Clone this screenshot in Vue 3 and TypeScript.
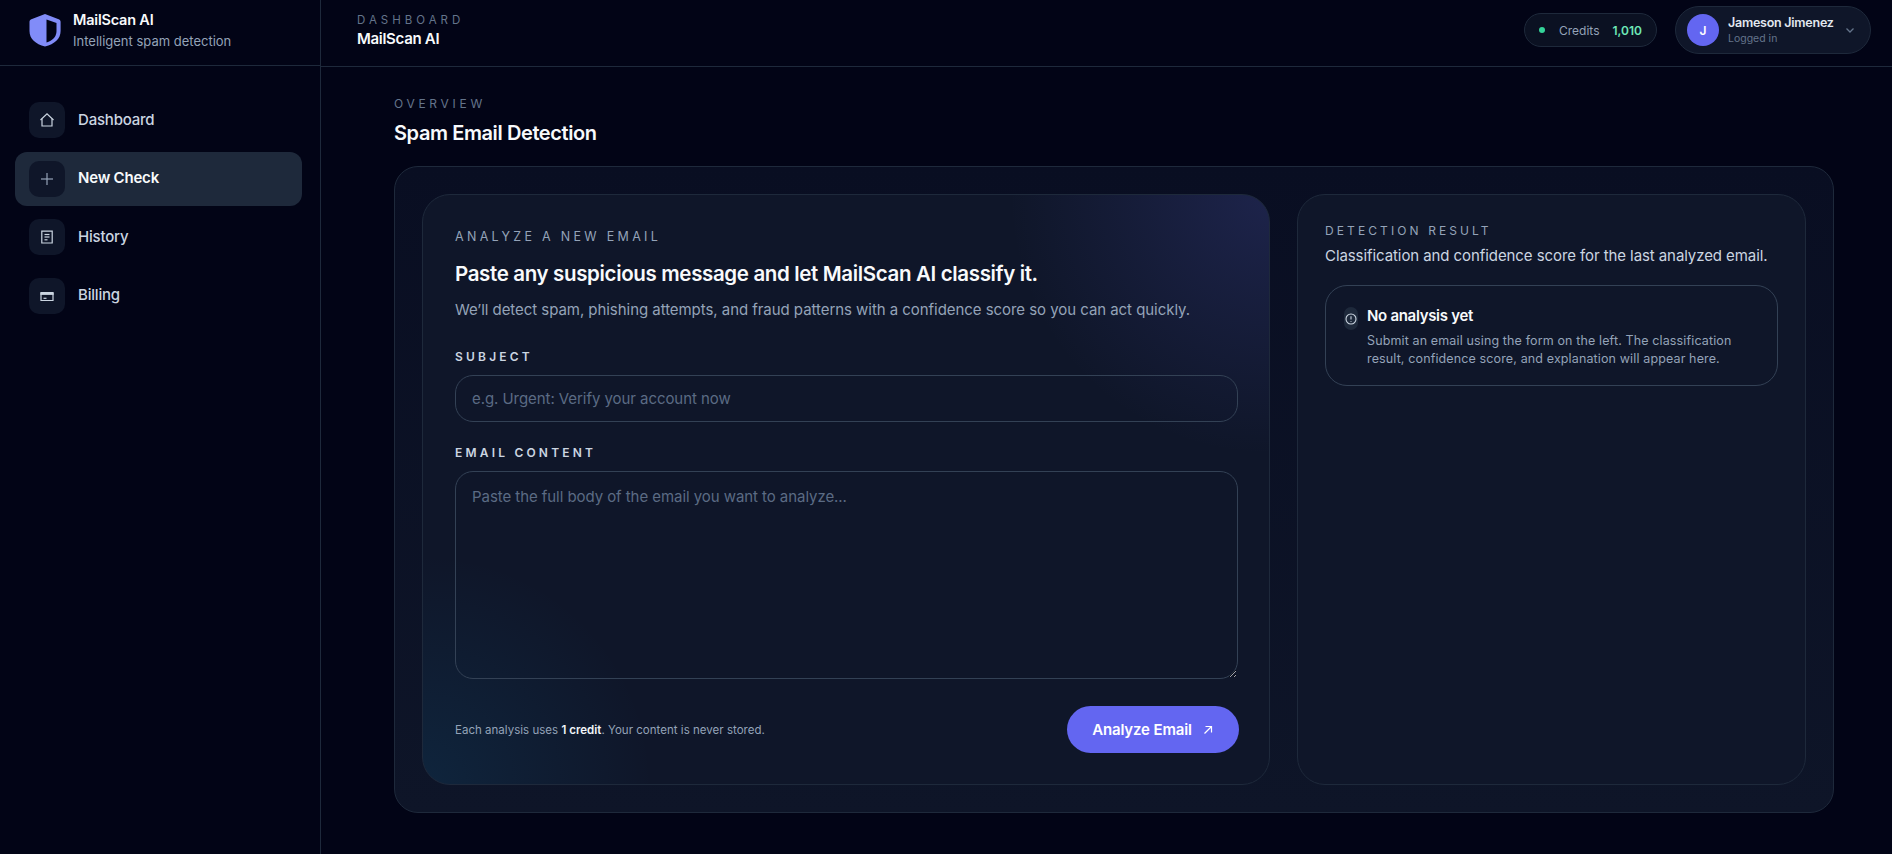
<script setup lang="ts">
interface NavItem {
  label: string
  active?: boolean
  paths: string[]
}

const navItems: NavItem[] = [
  { label: 'Dashboard', paths: ['M3.500 10 10 3.800l6.500 6.200', 'M5 8.800v7.200h10V8.800'] },
  { label: 'New Check', active: true, paths: ['M10 4v12', 'M4 10h12'] },
  { label: 'History', paths: ['M4.800 4.200h10.400v11.800H4.800z', 'M7.500 7.500h5', 'M7.500 10h5', 'M7.500 12.800h3'] },
  { label: 'Billing', paths: ['M4 6.500h12v8H4z', 'M4 7.300h12v1H4z', 'M6.500 12.300h3'] },
]
</script>

<template>
  <div class="app">
    <aside class="sidebar">
      <div class="brand">
        <svg class="shield" viewBox="0 0 32 34" width="32" height="34">
          <path d="M16 1 29 6c2 .7 2.600 1.600 2.600 3v9c0 8-6 13-15.600 15.500C6.500 31 .5 26 .5 18V9c0-1.400.6-2.300 2.500-3z" fill="#818cf8" />
          <path d="M17.500 6.500 27.500 10v8c0 5.800-4 9.500-10 11.500z" fill="#020416" />
        </svg>
        <div class="brand-text">
          <strong>MailScan AI</strong>
          <span>Intelligent spam detection</span>
        </div>
      </div>
      <nav class="nav">
        <a v-for="item in navItems" :key="item.label" class="nav-item" :class="{ active: item.active }">
          <span class="nav-icon">
            <svg viewBox="0 0 20 20" width="20" height="20" fill="none" stroke="currentColor" stroke-width="1.200">
              <path v-for="d in item.paths" :key="d" :d="d" />
            </svg>
          </span>
          <span class="nav-label">{{ item.label }}</span>
        </a>
      </nav>
    </aside>

    <div class="body">
      <header class="topbar">
        <div class="crumb">
          <span>DASHBOARD</span>
          <strong>MailScan AI</strong>
        </div>
        <div class="top-right">
          <div class="credits">
            <i class="dot"></i>
            <span class="credits-label">Credits</span>
            <b>1,010</b>
          </div>
          <div class="user">
            <span class="avatar">J</span>
            <div class="user-text">
              <strong>Jameson Jimenez</strong>
              <span>Logged in</span>
            </div>
            <svg viewBox="0 0 12 12" width="12" height="12" fill="none" stroke="#64748b" stroke-width="1.300">
              <path d="M2.500 4.500 6 8l3.500-3.500" />
            </svg>
          </div>
        </div>
      </header>

      <main class="main">
        <p class="eyebrow">OVERVIEW</p>
        <h1>Spam Email Detection</h1>

        <section class="shell">
          <form class="card form-card" @submit.prevent>
            <p class="label">ANALYZE A NEW EMAIL</p>
            <h2>Paste any suspicious message and let MailScan AI classify it.</h2>
            <p class="lead">We’ll detect spam, phishing attempts, and fraud patterns with a confidence score so you can act quickly.</p>

            <label class="field-label" for="subject">SUBJECT</label>
            <input id="subject" class="input" type="text" placeholder="e.g. Urgent: Verify your account now" />

            <label class="field-label second" for="content">EMAIL CONTENT</label>
            <textarea id="content" class="input area" placeholder="Paste the full body of the email you want to analyze..."></textarea>

            <div class="form-foot">
              <p>Each analysis uses <b>1 credit</b>. Your content is never stored.</p>
              <button type="submit" class="submit">
                Analyze Email
                <svg viewBox="0 0 12 12" width="12" height="12" fill="none" stroke="#fff" stroke-width="1.200">
                  <path d="M2.500 9.500 9.500 2.500" />
                  <path d="M3.500 2.500h6v6" />
                </svg>
              </button>
            </div>
          </form>

          <div class="card result-card">
            <p class="label result-label">DETECTION RESULT</p>
            <p class="result-sub">Classification and confidence score for the last analyzed email.</p>
            <div class="empty">
              <span class="empty-icon">
                <svg viewBox="0 0 14 14" width="14" height="14" fill="none" stroke="#cbd5e1" stroke-width="1.100">
                  <circle cx="7" cy="7" r="5" />
                  <path d="M7 4.200v3.400" />
                  <path d="M7 9.200v.8" />
                </svg>
              </span>
              <div>
                <h3>No analysis yet</h3>
                <p>Submit an email using the form on the left. The classification result, confidence score, and explanation will appear here.</p>
              </div>
            </div>
          </div>
        </section>
      </main>
    </div>
  </div>
</template>

<style>
html,
body {
  margin: 0;
  background: #020617;
}
</style>

<style scoped>
* {
  box-sizing: border-box;
}

.app {
  display: flex;
  height: 854px;
  overflow: hidden;
  background: #020416;
  color: #e2e8f0;
  font-family: Inter, "Noto Sans", sans-serif;
}

p,
h1,
h2,
h3 {
  margin: 0;
}

.sidebar {
  flex: 0 0 321px;
  border-right: 1px solid #1e293b;
}

.brand {
  display: flex;
  align-items: center;
  gap: 12px;
  height: 66px;
  padding: 0 29px 5px;
  border-bottom: 1px solid #1e293b;
}

.shield {
  flex: none;
}

.brand-text {
  display: flex;
  flex-direction: column;
  gap: 5px;
  margin-top: -1px;
}

.brand-text strong {
  font-size: 14.500px;
  font-weight: 600;
  letter-spacing: -0.2px;
  color: #f8fafc;
}

.brand-text span {
  font-size: 13px;
  color: #94a3b8;
}

.nav {
  display: flex;
  flex-direction: column;
  gap: 4.600px;
  padding: 27px 18px 0 15px;
}

.nav-item {
  display: flex;
  align-items: center;
  gap: 13px;
  height: 54px;
  padding: 0 14px;
  border-radius: 12px;
  font-size: 15px;
  font-weight: 500;
  letter-spacing: -0.2px;
  color: #cbd5e1;
}

.nav-item.active {
  background: #1e293b;
  color: #f8fafc;
  font-weight: 600;
}

.nav-icon {
  display: flex;
  align-items: center;
  justify-content: center;
  width: 36px;
  height: 36px;
  border-radius: 10px;
  background: #0f1629;
  color: #cbd5e1;
}

.nav-label {
  margin-bottom: 2px;
}

.active .nav-icon {
  color: #94a3b8;
}

.body {
  flex: 1;
  min-width: 0;
  display: flex;
  flex-direction: column;
}

.topbar {
  flex: 0 0 67px;
  display: flex;
  align-items: center;
  justify-content: space-between;
  padding: 0 21px 6px 36px;
  border-bottom: 1px solid #1e293b;
}

.crumb {
  display: flex;
  flex-direction: column;
  gap: 2px;
  margin-top: 1px;
}

.crumb span {
  font-size: 11.500px;
  letter-spacing: 4px;
  color: #64748b;
}

.crumb strong {
  font-size: 15px;
  font-weight: 600;
  letter-spacing: -0.3px;
  color: #f8fafc;
}

.top-right {
  display: flex;
  align-items: center;
  gap: 18px;
}

.credits {
  display: flex;
  align-items: center;
  width: 133px;
  height: 34px;
  padding: 0 14px;
  border: 1px solid #1e293b;
  border-radius: 17px;
  background: #0b1122;
  font-size: 12px;
}

.dot {
  width: 6px;
  height: 6px;
  border-radius: 50%;
  background: #34d399;
}

.credits-label {
  margin-left: 14px;
  color: #94a3b8;
}

.credits b {
  margin-left: auto;
  color: #6ee7b7;
  font-weight: 600;
}

.user {
  display: flex;
  align-items: center;
  width: 196px;
  height: 48px;
  padding: 0 14px 0 11px;
  border: 1px solid #1e293b;
  border-radius: 24px;
  background: #0f1629;
}

.avatar {
  display: flex;
  align-items: center;
  justify-content: center;
  width: 32px;
  height: 32px;
  border-radius: 50%;
  background: #6366f1;
  color: #fff;
  font-size: 12px;
  font-weight: 600;
}

.user-text {
  flex: 1;
  display: flex;
  flex-direction: column;
  gap: 2px;
  margin-left: 9px;
}

.user-text strong {
  font-size: 12.500px;
  font-weight: 600;
  letter-spacing: -0.25px;
  color: #e2e8f0;
}

.user-text span {
  font-size: 10.500px;
  color: #64748b;
}

.main {
  flex: 1;
  padding: 29px 58px 0 73px;
}

.eyebrow {
  font-size: 12px;
  letter-spacing: 3.700px;
  color: #64748b;
}

h1 {
  margin-top: 10px;
  font-size: 20px;
  font-weight: 600;
  letter-spacing: -0.4px;
  color: #f8fafc;
}

.shell {
  display: flex;
  gap: 27px;
  height: 647px;
  margin-top: 21px;
  padding: 27px;
  border: 1px solid #1e293b;
  border-radius: 24px;
  background: linear-gradient(180deg, #090e22 0%, #0e1528 100%);
}

.card {
  border: 1px solid #1e293b;
  border-radius: 28px;
  background: #0f1629;
}

.form-card {
  flex: 0 0 848px;
  display: flex;
  flex-direction: column;
  padding: 34px 31px 30px 32px;
  background:
    radial-gradient(circle 260px at 100% 0%, rgba(99, 102, 241, 0.17), transparent),
    radial-gradient(circle 230px at 0% 100%, rgba(14, 165, 233, 0.1), transparent),
    #0f1629;
}

.result-card {
  flex: 1;
  padding: 28px 27px;
}

.label {
  font-size: 12.500px;
  letter-spacing: 3.300px;
  color: #94a3b8;
}

h2 {
  margin-top: 17px;
  font-size: 20.500px;
  font-weight: 600;
  letter-spacing: -0.35px;
  color: #f8fafc;
}

.lead {
  margin-top: 14px;
  font-size: 15px;
  letter-spacing: -0.05px;
  color: #94a3b8;
}

.field-label {
  margin-top: 30px;
  margin-bottom: 11px;
  font-size: 12px;
  font-weight: 600;
  letter-spacing: 3.200px;
  color: #cbd5e1;
}

.field-label.second {
  margin-top: 23px;
}

.input {
  display: block;
  width: 100%;
  height: 47px;
  padding: 0 16px;
  border: 1px solid #334155;
  border-radius: 18px;
  outline: none;
  background: transparent;
  color: #e2e8f0;
  font: 15px Inter, "Noto Sans", sans-serif;
  letter-spacing: -0.06px;
}

.input::placeholder {
  color: #5b6b84;
}

.area {
  height: 208px;
  padding: 15px 16px;
}

.form-foot {
  display: flex;
  align-items: center;
  justify-content: space-between;
  margin-top: 27px;
}

.form-foot p {
  font-size: 11.500px;
  letter-spacing: 0.02px;
  color: #94a3b8;
}

.form-foot b {
  font-weight: 600;
  color: #f1f5f9;
}

.submit {
  display: flex;
  align-items: center;
  justify-content: center;
  gap: 10px;
  width: 172px;
  height: 47px;
  margin-right: -1px;
  border: none;
  border-radius: 24px;
  background: #6366f1;
  color: #fff;
  font: 600 15px Inter, "Noto Sans", sans-serif;
  letter-spacing: -0.15px;
}

.result-label {
  letter-spacing: 3.100px;
  font-size: 12px;
}

.result-sub {
  margin-top: 8px;
  font-size: 15px;
  letter-spacing: -0.08px;
  color: #cbd5e1;
}

.empty {
  display: flex;
  gap: 9px;
  height: 101px;
  margin-top: 20px;
  padding: 20px 18px 0;
  border: 1px solid #334155;
  border-radius: 22px;
}

.empty-icon {
  flex: none;
  display: flex;
  align-items: center;
  justify-content: center;
  width: 14px;
  height: 23px;
  margin-top: 1px;
  border-radius: 7px;
  background: #1e293b;
}

h3 {
  font-size: 15px;
  font-weight: 600;
  letter-spacing: -0.3px;
  color: #f8fafc;
}

.empty p {
  margin-top: 7px;
  font-size: 12.500px;
  line-height: 18px;
  letter-spacing: 0.13px;
  color: #94a3b8;
}
</style>
